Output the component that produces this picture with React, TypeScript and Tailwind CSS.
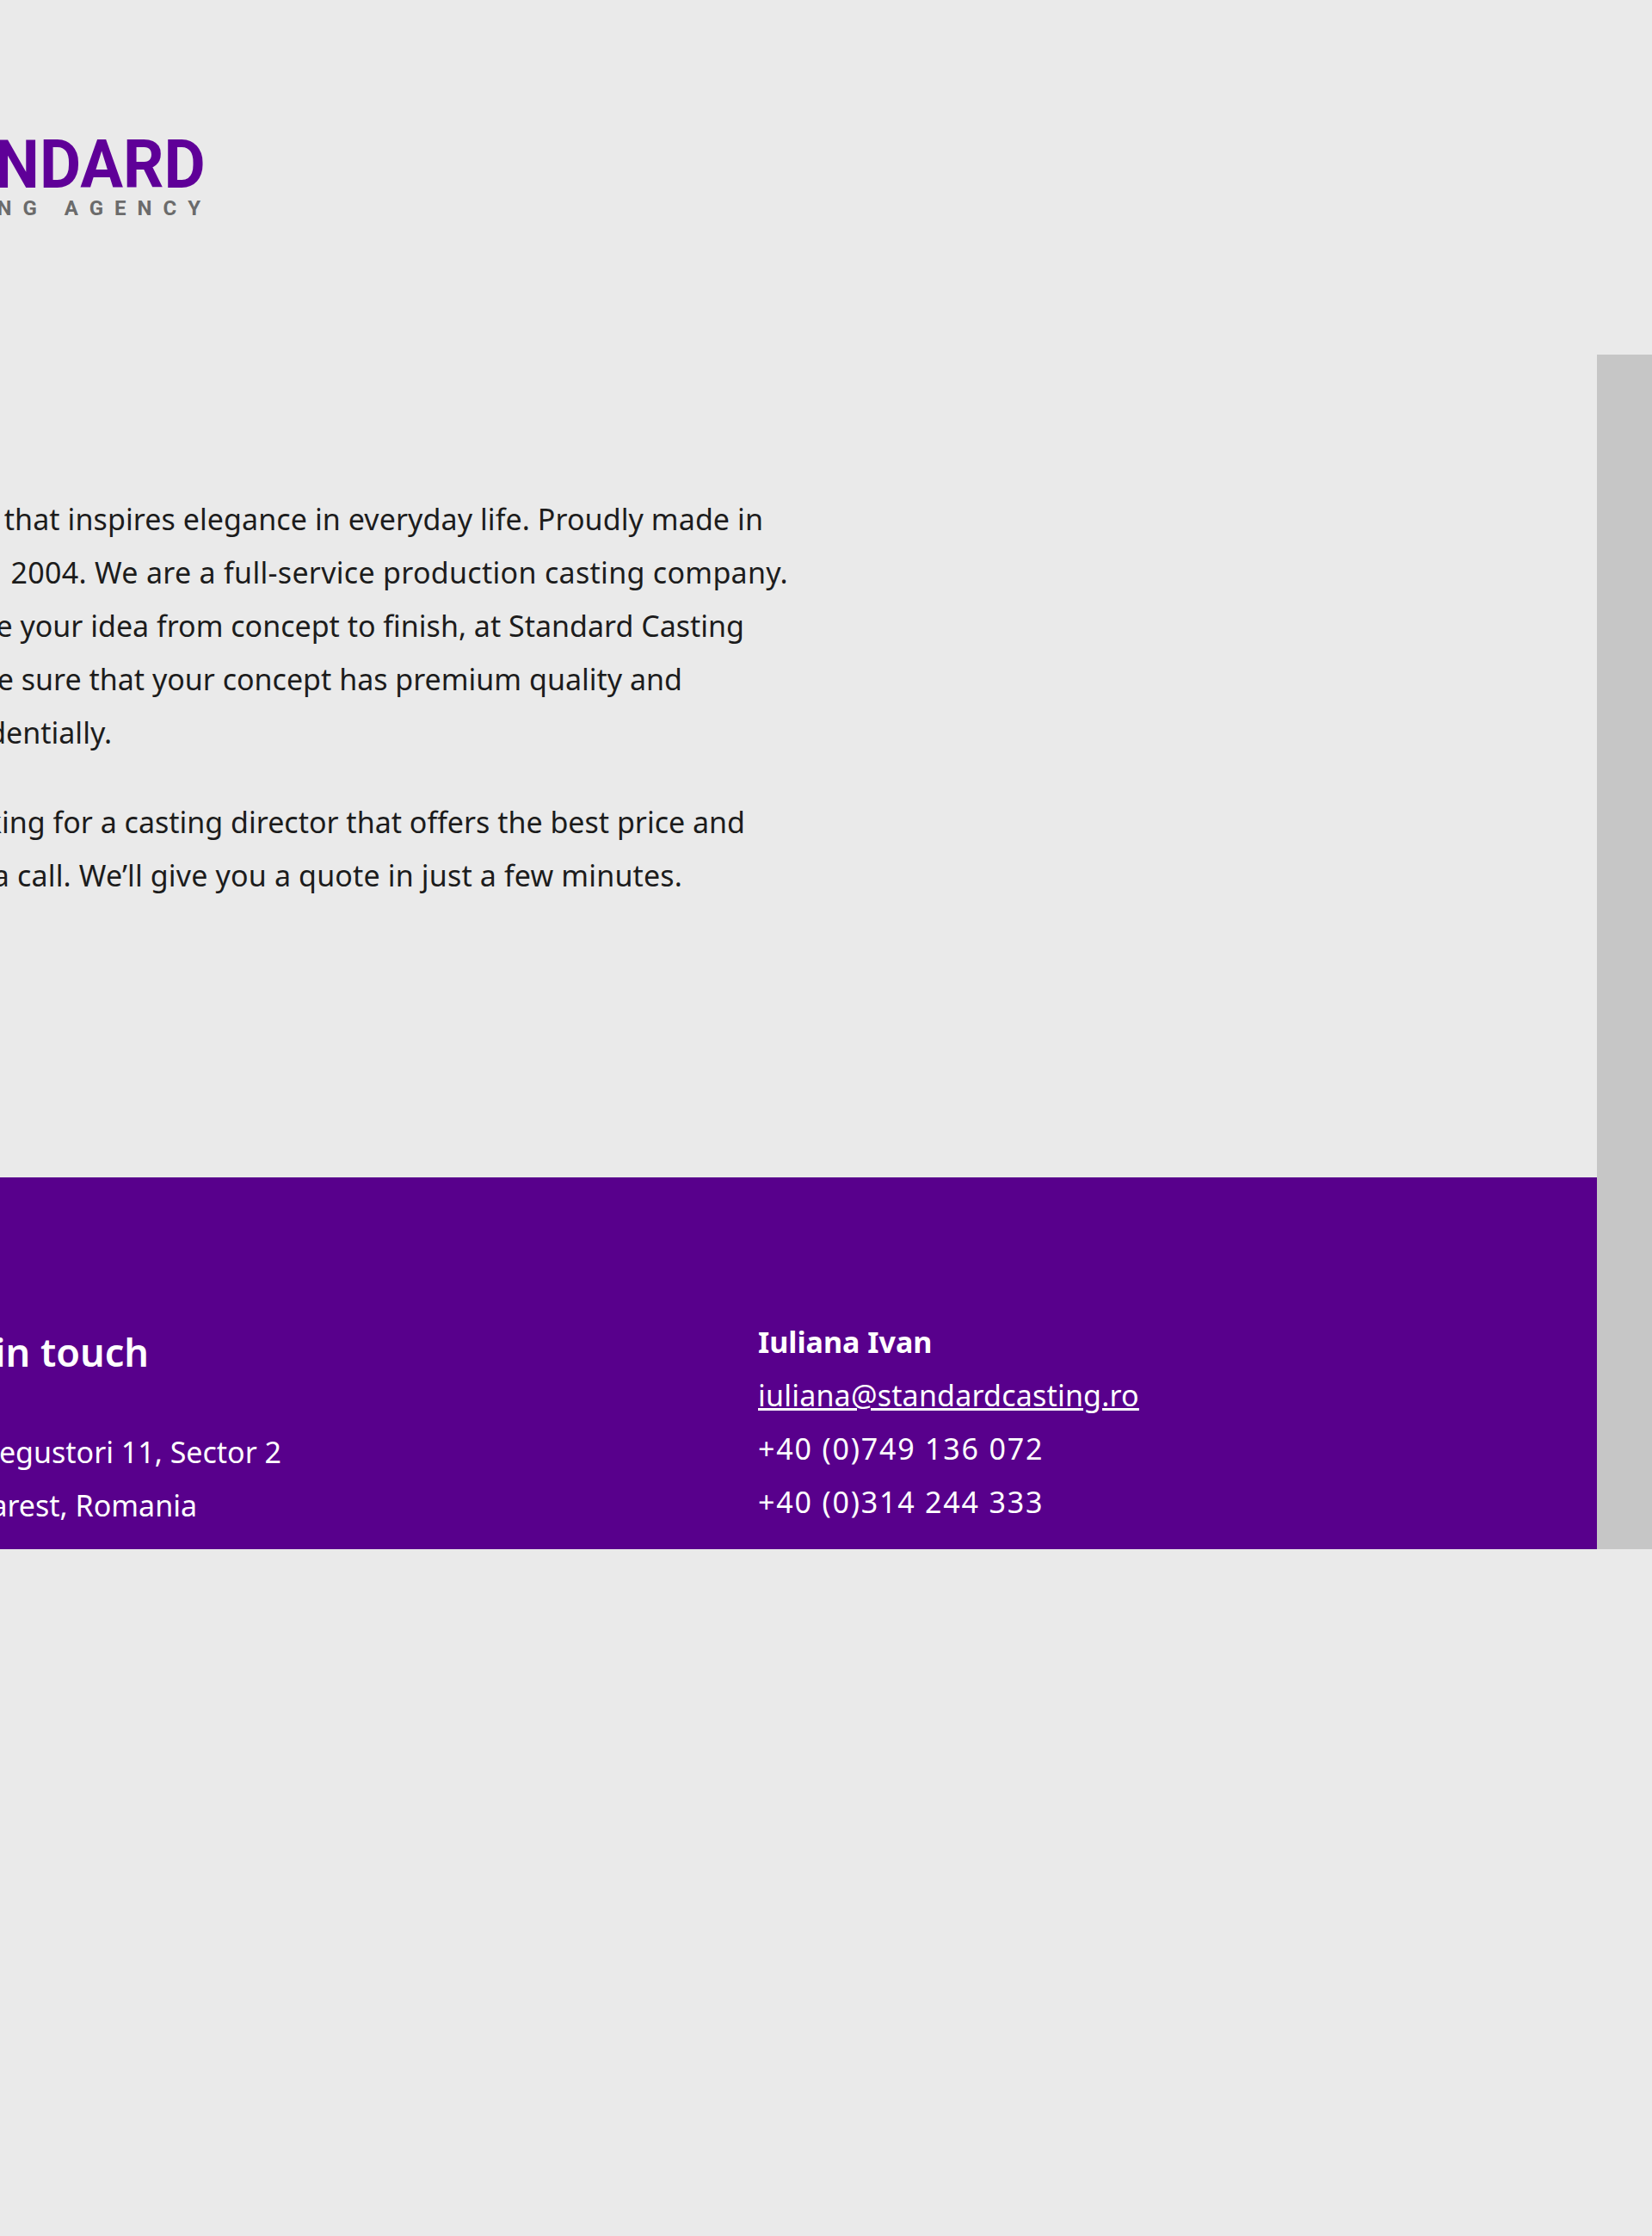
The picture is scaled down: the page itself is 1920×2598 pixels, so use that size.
const bodyFont = "font-['Noto_Sans',sans-serif]";

// one line of copy, its right end is fixed and the start may run off the left side
function Line({ width, children }: { width: string; children: React.ReactNode }) {
  return <div className={`flex justify-end whitespace-nowrap ${width}`}>{children}</div>;
}

function Logo() {
  return (
    <div className="h-[412px] pt-[146px] font-['Roboto',sans-serif] font-bold">
      <div className="flex w-[239px] justify-end whitespace-nowrap">
        <span className="origin-right scale-x-[0.95] text-[78px] leading-[92px] text-[#5f0098]">STANDARD</span>
      </div>
      <div className="-mt-[10px] flex w-[233px] justify-end whitespace-nowrap">
        <span className="text-[24px] leading-[28px] tracking-[13px] -mr-[13px] text-[#6b6b6b]">CASTING AGENCY</span>
      </div>
    </div>
  );
}

function Intro() {
  return (
    <div className="h-[956px] pt-[160px] text-[34px] leading-[62px] text-[#1c1c1c]">
      <Line width="w-[887px]"><span className="tracking-[0.08px]">that inspires elegance in everyday life. Proudly made in</span></Line>
      <Line width="w-[916px]"><span className="tracking-[0.3px]">2004. We are a full-service production casting company.</span></Line>
      <Line width="w-[865px]">e your idea from concept to finish, at Standard Casting</Line>
      <Line width="w-[793px]">e sure that your concept has premium quality and</Line>
      <Line width="w-[130px]">dentially.</Line>
      <div className="h-[42px]" />
      <Line width="w-[866px]">king for a casting director that offers the best price and</Line>
      <Line width="w-[793px]"><span className="tracking-[0.15px]">a call. We’ll give you a quote in just a few minutes.</span></Line>
    </div>
  );
}

function Footer() {
  return (
    <div className="flex h-[432px] bg-[#58008c] pt-[160px] text-[34px] leading-[62px] text-white">
      <div className="w-[881px] pt-[12px]">
        <Line width="w-[173px]">
          <span className="text-[45px] font-semibold leading-[62px]">Get in touch</span>
        </Line>
        <div className="h-[54px]" />
        <Line width="w-[327px]">Negustori 11, Sector 2</Line>
        <Line width="w-[229px]">Bucharest, Romania</Line>
      </div>
      <div>
        <p className="font-bold">Iuliana Ivan</p>
        <a className="underline tracking-[0.2px]">iuliana@standardcasting.ro</a>
        <p className="tracking-[1.8px]">+40 (0)749 136 072</p>
        <p className="tracking-[1.8px]">+40 (0)314 244 333</p>
      </div>
    </div>
  );
}

export default function App() {
  return (
    <div className={`h-[2598px] w-[1920px] overflow-hidden bg-[#eaeaea] ${bodyFont}`}>
      <Logo />
      <div className="flex">
        <main className="w-[1856px]">
          <Intro />
          <Footer />
        </main>
        <aside className="w-[64px] bg-[#c6c6c6]" />
      </div>
    </div>
  );
}
